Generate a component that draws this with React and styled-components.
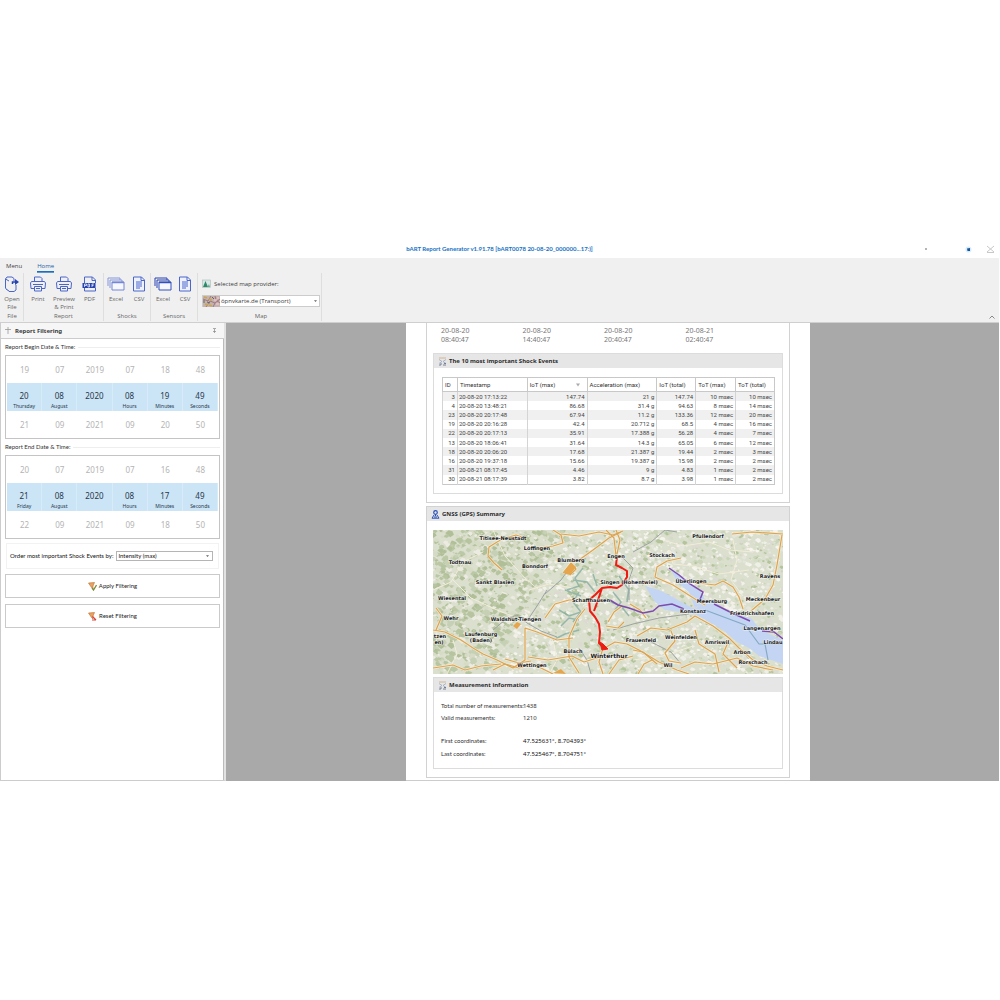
import React from "react";
import styled, { createGlobalStyle, css } from "styled-components";

const Global = createGlobalStyle`
  * { box-sizing: border-box; }
  body { margin: 0; background: #fff; font-family: "Open Sans", "Noto Sans", sans-serif; font-size: 6px; line-height: 8px; color: #3c3c3c; }
  button, select { font: inherit; color: inherit; margin: 0; padding: 0; border: 0; background: none; border-radius: 0; }
  p, h1, h2, h3 { margin: 0; font: inherit; }
`;

const sans = css`font-family: "Noto Sans", "Open Sans", sans-serif;`;
const grid = css`font-family: Roboto, "Liberation Sans", sans-serif;`;
const narrow = css`font-family: Lato, "Liberation Sans", sans-serif;`;

const Window = styled.div`padding: 240px 1px 0 0; min-height: 100vh;`;

/* ---------- title bar ---------- */
const TitleBar = styled.header`
  display: grid; grid-template-columns: 1fr auto 1fr; align-items: center; height: 18px;
`;
const Title = styled.h1`
  && { ${narrow} grid-column: 2; font-weight: 700; font-size: 6px; color: #1671c4; white-space: nowrap; }
`;
const WindowButtons = styled.div`display: flex; justify-content: flex-end; gap: 12px; padding-right: 4px;`;
const WindowButton = styled.button`display: grid; place-items: center; width: 10px; height: 10px; &:first-child { margin-right: 20px; }`;

/* ---------- ribbon ---------- */
const Ribbon = styled.div`background: #f0f0f0; border-bottom: 1px solid #cfcfcf; height: 65px;`;
const Tabs = styled.nav`display: flex; gap: 15px; padding: 3px 0 0 6px; height: 15px;`;
const Tab = styled.button`
  height: 11px; line-height: 10px; font-size: 6px; color: #444;
  border-bottom: 1px solid transparent;
  ${p => p.$active && css`color: #1c5fa8; border-bottom-color: #1c6fbe; box-shadow: 0 1px #5b96cf;`}
`;
const Groups = styled.div`display: flex; height: 48px; padding-left: 1px;`;
const Group = styled.section`
  display: flex; flex-direction: column; justify-content: space-between;
  padding: 0 ${p => p.$end ?? p.$pad ?? 0}px 0 ${p => p.$pad || 0}px; border-right: 1px solid #dedede;
`;
const GroupBody = styled.div`display: flex; justify-content: center;`;
const Caption = styled.h2`&& { text-align: center; font-size: 6px; line-height: 10px; color: #666; }`;
const Tool = styled.button`
  display: flex; flex-direction: column; align-items: center; justify-content: flex-start;
  width: ${p => p.$w || 22}px; height: 38px; padding-top: 3px; color: #666; line-height: 8px;
  svg { display: block; margin-bottom: 3px; flex: none; }
`;
const MapGroup = styled.div`display: flex; flex-direction: column; gap: 7px; padding: 6px 0 0; width: 118px;`;
const MapLabel = styled.label`display: flex; align-items: center; gap: 3px; white-space: nowrap; svg { flex: none; }`;
const MapPicker = styled.div`display: flex; align-items: center; background: #fff; border: 1px solid #ccc; height: 12px; padding-right: 1px; svg { flex: none; }`;
const Collapse = styled.button`margin-left: auto; align-self: flex-end; padding: 0 4px 1px; line-height: 6px;`;
const Select = styled.select`appearance: none; display: block; flex: 1; min-width: 0; height: 10px; line-height: 10px; padding-left: 1px;`;

/* ---------- body ---------- */
const Body = styled.div`display: flex; align-items: stretch; height: 458px; overflow: hidden;`;
const Sidebar = styled.aside`
  ${narrow} width: 226px; flex: none; border-right: 2px solid #e2e2e2; border-left: 1px solid #ccc; background: #fff;
  box-shadow: inset -1px 0 #bbb; border-bottom: 1px solid #ccc;
`;
const SideHead = styled.div`
  display: flex; align-items: center; gap: 4px; height: 16px; padding: 0 8px 0 4px; background: #f6f6f6; border-bottom: 1px solid #ccc;
`;
const SideTitle = styled.h2`&& { ${sans} flex: 1; font-weight: 700; line-height: 14px; }`;
const Stack = styled.div`padding: 4px 4px 0; display: flex; flex-direction: column;`;
const Wheel = styled.section`margin-bottom: 4px;`;
const Legend = styled.h3`
  && { display: flex; align-items: center; gap: 3px; font-size: 6px; line-height: 8px; margin-bottom: 4px; color: #333; }
  &::after { content: ""; flex: 1; border-top: 1px solid #eee; }
`;
const WheelBox = styled.div`
  ${sans} display: grid; grid-template-columns: repeat(6, 1fr); height: 84px; border: 1px solid #c4c4c4; padding: 0 1px;
`;
const WheelCol = styled.div`display: grid; grid-template-rows: 27px 28px 27px; text-align: center; min-width: 0;`;
const Faded = styled.span`font-size: 8px; line-height: 27px; color: #b4b4b4;`;
const Current = styled.span`
  display: block; background: #cbe4f6; padding-top: 8px; border-right: 1px solid #d8ebf9; color: #28394a;
  font-size: 8px; line-height: 10px;
  small { display: block; font-size: 5px; line-height: 10px; }
`;
const OrderRow = styled.div`
  display: flex; align-items: center; gap: 3px; height: 26px; margin: 0 1px 5px; padding: 0 5px 0 3px; border: 1px solid #f2f2f2;
  color: #111; white-space: nowrap;
`;
const OrderBox = styled.div`display: flex; align-items: center; flex: 1; min-width: 0; height: 10px; border: 1px solid #b5b5b5; padding-right: 2px; select { height: 8px; line-height: 8px; }`;
const Action = styled.button`
  display: flex; align-items: center; justify-content: center; gap: 2px; height: 24px; margin-bottom: 6px;
  border: 1px solid #cacaca; background: #fff; color: #222;
`;

const Viewer = styled.main`${sans} flex: 1; background: #a9a9a9; padding-right: 9px; display: flex; justify-content: center; min-width: 0;`;
const Page = styled.article`width: 404px; background: #fff; padding: 0 20px; border-bottom: 1px solid #ccc;`;
const Block = styled.section`border: 1px solid #d2d2d2; ${p => p.$open ? "border-top: 0;" : ""} padding-bottom: 8px; margin-bottom: 3px;`;
const Dates = styled.div`
  display: grid; grid-template-columns: repeat(4, 1fr); padding: 3px 22px 9px 14px; font-size: 7px; line-height: 9px; color: #777;
  p { white-space: pre-line; }
`;
const Bar = styled.h2`
  && { display: flex; align-items: center; gap: 2px; height: 14px; padding-left: 4px; background: #e6e6e6; color: #2c2c2c; font-weight: 700; }
`;
const Panel = styled.div`margin: 0 6px; border: 1px solid #dcdcdc; padding-bottom: 8px;`;

const Table = styled.table`
  ${grid}
  width: calc(100% - 15px); margin: 9px 7px 0 8px; height: 108px; border-collapse: collapse; table-layout: fixed; font-size: 6px; line-height: 8px;
  border: 1px solid #c8c8c8; color: #444;
  th { height: 14px; padding: 0 2px; font-weight: 400; text-align: left; border: 1px solid #c8c8c8; border-width: 1px 0 1px 1px; white-space: nowrap; color: #333; }
  td { padding: 0 2px; text-align: right; border-left: 1px solid #d4d4d4; white-space: nowrap; }
  td:nth-child(2) { text-align: left; padding-left: 1px; }
  tbody tr:nth-child(odd) { background: #f0f0f0; }
`;
const SortHead = styled.span`display: flex; justify-content: space-between; align-items: center; padding-right: 5px;`;

const MapFrame = styled.div`margin: 9px 6px 3px; height: 144px; svg { display: block; width: 100%; height: 144px; }`;
const Facts = styled.dl`
  margin: 8px 7px 0; display: grid; grid-template-columns: 82px 1fr; grid-template-rows: 12px 12px 10px 13px 13px; align-items: center; color: #333;
  dt, dd { margin: 0; white-space: nowrap; }
  dt { ${narrow} }
  dd.strong { color: #111; }
`;
const Gap = styled.i`grid-column: 1 / -1;`;

/* ---------- icons ---------- */
const BLUE = "#4b66c8";
const Icon = ({ children, w = 16, h = 16, v = "0 0 16 16" }) => (
  <svg width={w} height={h} viewBox={v} fill="none" stroke={BLUE} strokeWidth="1" aria-hidden="true">{children}</svg>
);
const OpenIcon = () => (
  <Icon>
    <path d="M10 2.500L8 1H3L1.500 3v9L3 14h1l1 1.500h5l2-1.500V9M10 2.500V5M1.500 3L5 5" />
    <path d="M8.500 8V6H12" strokeWidth="1.500" stroke="#2743b0" />
    <path d="M11 3l4 3-4 3z" fill="#2743b0" stroke="none" />
  </Icon>
);
const PrintIcon = () => (
  <Icon>
    <path d="M4.500 6V1h6l1.500 1.500V6M4 12.500H1L.5 7l1-1.500h13L15.500 7l-.5 5.500h-3" />
    <path d="M4.500 10.500h7v4.500h-7zM3 8.500h10M6 12.500h4" />
  </Icon>
);
const PdfIcon = () => (
  <Icon>
    <path d="M2.500 7V1h8l3 3v3M2.500 12v3h11v-3M10 1v3.500h3.500" />
    <rect x=".5" y="7" width="13" height="5" fill="#2743b0" stroke="none" />
    <path d="M2.500 11V8h2v1.500h-2M6 8v3h1.500V8zM10 11V8h2M10 9.500h1.500" stroke="#fff" strokeWidth=".7" />
  </Icon>
);
const SheetsIcon = ({ dark }) => (
  <Icon w={18} v="0 0 18 16">
    <path d="M1 10V2h12v2M3 12V4h12v2" stroke={dark ? "#2743b0" : "#8797dc"} />
    <path d="M5 6h12v8H5z" fill="#f7f8ff" stroke={dark ? "#3350bb" : "#7487d6"} />
    <path d="M5 6.500h12" strokeWidth="1.500" stroke={dark ? "#3350bb" : "#7487d6"} />
  </Icon>
);
const CsvIcon = () => (
  <Icon>
    <path d="M2.500 1h8l3 3v11h-11z" fill="#eef1ff" />
    <path d="M10 1v3.500h3.500M5 6h6M5 8h6M5 10h6M5 12h4" />
  </Icon>
);
const Arrow = () => <svg width="5" height="4" viewBox="0 0 5 4" aria-hidden="true"><path d="M1 1.200h3L2.500 2.900z" fill="#666" /></svg>;
const PicIcon = () => (
  <svg width="9" height="9" viewBox="0 0 9 9" aria-hidden="true">
    <rect x=".5" y="1" width="8" height="7.500" fill="#d8e8e4" stroke="#a9bdb9" strokeWidth=".6" />
    <path d="M1 8l2.500-6L6 8z" fill="#2f8a6a" /><path d="M5.500 8L7 5l1 3z" fill="#66a98e" />
  </svg>
);
const ThumbIcon = () => (
  <svg width="17" height="11" viewBox="0 0 17 11" aria-hidden="true">
    <rect width="17" height="11" fill="#c4b3ae" />
    <path d="M0 3l5 2 3-5M3 11l4-6 5 2 5-4M10 11l2-4M12 0l1 4 4 3" stroke="#8f5f6b" fill="none" strokeWidth=".7" />
    <path d="M1 1l3 1M2 8l3 1M6 3l3 1M6 9l3 1" stroke="#c9a650" strokeWidth="1.500" />
    <path d="M4 6l3 1M1 4v3M9 1l2 2" stroke="#666" />
    <path d="M11 4h3M13 8h3M14 2h2" stroke="#e7c3cb" strokeWidth="1.500" />
  </svg>
);
const ChartIcon = () => (
  <svg width="9" height="9" viewBox="0 0 9 9" fill="none" aria-hidden="true">
    <path d="M1 1h7" stroke="#cfa878" strokeWidth=".8" /><path d="M1 2.500l3 2-3 2M8 2.500l-3 2 3 2" stroke="#9aaac0" strokeWidth=".8" />
    <path d="M1 8h2V6M5 8h3M6 6.500h2" stroke="#5c6a80" strokeWidth=".8" />
  </svg>
);
const GpsIcon = () => (
  <svg width="9" height="9" viewBox="0 0 9 9" fill="none" stroke="#2a50b8" aria-hidden="true">
    <circle cx="4.500" cy="2.500" r="1.800" strokeWidth="1.200" /><path d="M4.500 4v2M3 5L1 8.200h7L6 5M3 7h3" />
  </svg>
);
const FunnelIcon = ({ mark }) => (
  <svg width="9" height="9" viewBox="0 0 9 9" fill="none" aria-hidden="true">
    <path d="M.5 1l6-.5L5 4v3L3.500 5.500z" fill="#e9a45c" stroke="#bd6c35" strokeWidth=".6" />
    {mark === "ok"
      ? <path d="M4 6l1.500 2L8.500 3" stroke="#7d8a3a" strokeWidth="1.300" />
      : <path d="M4.500 4.500l3.500 3.500M8 8H4" stroke="#d8453a" strokeWidth="1.200" />}
  </svg>
);

/* ---------- map ---------- */
const labels = [
  ["Titisee-Neustadt", 70, 8], ["Pfullendorf", 275, 6], ["Löffingen", 104, 18], ["Todtnau", 27, 32], ["Bonndorf", 102, 36],
  ["Blumberg", 138, 30], ["Engen", 183, 26], ["Stockach", 229, 25], ["Sankt Blasien", 62, 52], ["Singen (Hohentwiel)", 196, 52],
  ["Überlingen", 258, 51], ["Ravens", 337, 46], ["Wiesental", 19, 68], ["Schaffhausen", 158, 70], ["Meersburg", 279, 71],
  ["Meckenbeur", 330, 69], ["Konstanz", 260, 81], ["Friedrichshafen", 319, 83], ["Wehr", 18, 88], ["Waldshut-Tiengen", 83, 89],
  ["Laufenburg", 48, 104], ["(Baden)", 48, 110], ["Langenargen", 329, 98], ["Frauenfeld", 208, 110], ["Weinfelden", 248, 107],
  ["Amriswil", 284, 112], ["Lindau", 340, 112], ["tzen", 7, 106], ["en)", 6, 112], ["Bülach", 140, 121], ["Arbon", 309, 122],
  ["Rorschach", 320, 132], ["Wettingen", 99, 135], ["Wil", 235, 135],
];
let seed = 11;
const rnd = () => ((seed = (seed * 16807) % 2147483647) / 2147483647);
const patches = Array.from({ length: 3600 }, () => {
  const x = rnd() * 350, y = rnd() * 144, west = x + y * 0.6 < 140;
  const pool = west
    ? ["#b6c49f", "#bbc8a5", "#b0bf98", "#c6d0b4", "#d6dbc6", "#ecebe2"]
    : ["#b3c39c", "#c9d4b8", "#eeefe6", "#f2f0e8", "#e4e6dc", "#f6f4ef", "#dcdad2", "#d3dcc4"];
  const s = 1 + rnd() * (west ? 3 : 2);
  return [x, y, s, pool[Math.floor(rnd() * pool.length)], rnd()];
});
const roads = [
  "M69 9l-13 8-1 9 6 7 8 7M69 9l14-4 6 2", "M120 0l8 5 2 8-10 3-14 2", "M128 4l18 2 20-4 14 3 10-4",
  "M130 43l8-10 5 6-6 6M146 30l14-10 16-12 12-6", "M0 100l12 2 16 8 12 8 10 6 14 6 16 8 12-8 0-32 12 4 20 8 16-2",
  "M0 138l20-3 12 5 16-4 20-2M95 127l20 3 24-4 12 6 16-5", "M112 88l10-14 14-4 12 0M136 107l8-18 8-10",
  "M136 107l0 20 10 16M168 120l14-8 12 2 12 6 20 12 18 8 12 4", "M183 26l-2-18-8-8M183 0l4 10-3 14",
  "M222 47l2-10 10-6 14-3M222 47l18 8 22 14 10 6", "M197 74l10 6 6 8M258 52l24 3 8-4 10 6 6 10 4 12",
  "M299 4l20-2 31 2M349 5l-5 30-4 20M340 55l-8 14-14 12", "M262 86l-8 6-20 8-16-2-14 8M262 86l18 10 16 12 10 10 14 12 14 6 16 4",
  "M175 92l6-10 8-6M173 96l12 2 6-6M170 118l-4 14 4 12M176 144l10-14 14-4M238 101l4 10-10 12 4 8 12 2",
  "M262 100l4 14 16 10 4 18M296 110l-6 14 14 14M248 138l14-6 18 2 24-6 16 8 20 4", "M72 129l14 4 12-2M60 140l12-6 14 4 14-4 20 10",
  "M3 78l6 8-6 14", "M205 144l6-10 8-4M200 120l10 2 14 12",
];
const greys = [
  "M60 100l12-10 12-5 10 8 14 8 16 6", "M114 60l-10 16-8 12M112 64l16-14 10-14", "M200 22l18-10 14-12 12 2",
  "M190 28l10 10-4 12 0 20M180 100l20-6 26-6 30-4", "M196 110l22 2 20 10 10 12", "M146 118l8 12 4 14",
];
const lanes = [
  "M20 50l18 18 26 12 20 8", "M60 0l12 26 20 22 14 12", "M0 60l18-8 12-20 20-10", "M96 60l20-6 24 4", "M230 10l20 6 26-4 20 8 24 2",
  "M236 20l4 14 20 2 26 8 30-4", "M300 10l4 20-6 20 12 16", "M200 130l30-4 30-10M14 144l10-20-4-14M120 110l4 20-8 14",
];
const teals = [
  "M150 38l-8 10 4 8-12 4M160 44l4 12M128 96l8-8 10 2M146 62l-6 10 8 10-8 10M180 62l8 10-6 8M132 60l16 6",
  "M174 70l14 6 8 10M120 110l12-6 14-4M186 46l10 14-2 12M140 50l14 2 8 10M126 80l10 6 12-4M196 58l-2 12",
];

function RouteMap() {
  return (
    <svg viewBox="0 0 350 144" preserveAspectRatio="xMidYMid slice" role="img" aria-label="Route map">
      <rect width="350" height="144" fill="#dbdfcd" />
      {patches.map(([x, y, s, c, r], i) => (
        <path key={i} fill={c} d={`M${x - s} ${y}l${s * r} ${-s * 0.8}l${s} ${s * 0.3}l${s * 0.4} ${s * r}l${-s} ${s * 0.7}z`} />
      ))}
      <g fill="none" stroke="#f2edd8" strokeWidth="1">{lanes.map(d => <path key={d} d={d} />)}</g>
      <g fill="none" stroke="#86aea2" strokeWidth="1.500" opacity=".8">{teals.map(d => <path key={d} d={d} />)}</g>
      <path d="M212 56l14 4 12 6 12 7 12 6 10-8 8-1 10 8 12 6 16 4 8 10 10 6 14 6v24l-12-4-12-4-10-8-12-6-14-12-14-8-14-8-14-2-16-2-10-8z" fill="#c3d5f2" />
      <path d="M238 40l8 4 14 12 10 8 2 8-10 6-6-16-12-10z" fill="#c3d5f2" />
      <g fill="none" stroke="#9da3a3" strokeWidth="1">{greys.map(d => <path key={d} d={d} />)}</g>
      <g fill="none" stroke="#f5ead0" strokeWidth="2.400" strokeLinejoin="round">{roads.map(d => <path key={d} d={d} />)}</g>
      <g fill="none" stroke="#d9a456" strokeWidth="1.200" strokeLinejoin="round">{roads.map(d => <path key={d} d={d} />)}</g>
      <path d="M130 43l8-10 5 4-6 8zM80 96l4-4 4 2-4 5zM120 143l8-4 5 5z" fill="#e6a54a" />
      <path d="M272 80l40 15 14 19h24M332 114l3 16" fill="none" stroke="#86a9c4" strokeWidth="1.200" />
      <path d="M177 70l8 5 11 3 14 5 10-2 6-5 13-2 12 5M236 38l10 7 11 9 13 8-4 10M281 74l18 9 18 8M329 101l12 1 9 7" fill="none" stroke="#7d4bae" strokeWidth="1.500" />
      <path d="M184 27l-1 8 6 3 5 3v6l-5 8-5 3-7-1-8 1-7 7-6 5 1 11 5 6 4 7 1 8-1 11 5 5M169 58l-4 12-4 11" fill="none" stroke="#ee1b12" strokeWidth="2" strokeLinejoin="round" />
      <path d="M167 112l3 2 5 5-6 1z" fill="#ee1b12" stroke="#ee1b12" />
      <g fontFamily="DejaVu Sans, Verdana, sans-serif" fontWeight="700" fontSize="5" fill="#222" stroke="#fff" strokeOpacity=".65" strokeWidth="1.200" paintOrder="stroke" textAnchor="middle">
        {labels.map(([t, x, y]) => <text key={t} x={x} y={y + 2}>{t}</text>)}
        <text x="176" y="128" fontSize="6">Winterthur</text>
      </g>
    </svg>
  );
}

/* ---------- data ---------- */
const rows = [
  ["3", "20-08-20 17:13:22", "147.74", "21 g", "147.74", "10 msec", "10 msec"],
  ["4", "20-08-20 13:48:21", "86.68", "31.4 g", "94.63", "8 msec", "14 msec"],
  ["23", "20-08-20 20:17:48", "67.94", "11.2 g", "133.36", "12 msec", "20 msec"],
  ["19", "20-08-20 20:16:28", "42.4", "20.712 g", "68.5", "4 msec", "16 msec"],
  ["22", "20-08-20 20:17:13", "35.91", "17.388 g", "56.28", "4 msec", "7 msec"],
  ["13", "20-08-20 18:06:41", "31.64", "14.3 g", "65.05", "6 msec", "12 msec"],
  ["18", "20-08-20 20:06:20", "17.68", "21.387 g", "19.44", "2 msec", "3 msec"],
  ["16", "20-08-20 19:37:18", "15.66", "19.387 g", "15.98", "2 msec", "2 msec"],
  ["31", "20-08-21 08:17:45", "4.46", "9 g", "4.83", "1 msec", "2 msec"],
  ["30", "20-08-21 08:17:39", "3.82", "8.7 g", "3.98", "1 msec", "2 msec"],
];
const widths = [15, 70, 60, 70, 39, 40, 39];
const heads = ["ID", "Timestamp", "IoT (max)", "Acceleration (max)", "IoT (total)", "ToT (max)", "ToT (total)"];

const DateWheel = ({ title, cols }) => (
  <Wheel>
    <Legend>{title}</Legend>
    <WheelBox>
      {cols.map(([before, now, after, unit], i) => (
        <WheelCol key={i}>
          <Faded>{before}</Faded>
          <Current>{now}<small>{unit}</small></Current>
          <Faded>{after}</Faded>
        </WheelCol>
      ))}
    </WheelBox>
  </Wheel>
);

export default function App() {
  return (
    <Window>
      <Global />
      <TitleBar>
        <Title>bART Report Generator v1.91.78 [bART0078 20-08-20_000000...17:)]</Title>
        <WindowButtons>
          <WindowButton aria-label="Minimize"><svg width="4" height="4"><circle cx="2" cy="2" r=".8" fill="#555" /></svg></WindowButton>
          <WindowButton aria-label="Restore"><svg width="7" height="7"><circle cx="3.500" cy="3.500" r="3" fill="#d6ecfb" /><path d="M2 2.500L5 2v3H2.500z" fill="#17549c" /></svg></WindowButton>
          <WindowButton aria-label="Close"><svg width="9" height="8" stroke="#c8c8c8" fill="none"><path d="M1 1l7 6M8 1L1 7M1 7.500h7" /></svg></WindowButton>
        </WindowButtons>
      </TitleBar>

      <Ribbon>
        <Tabs><Tab>Menu</Tab><Tab $active>Home</Tab></Tabs>
        <Groups>
          <Group>
            <GroupBody><Tool><OpenIcon />Open<br />File</Tool></GroupBody>
            <Caption>File</Caption>
          </Group>
          <Group $pad={1}>
            <GroupBody>
              <Tool $w={26}><PrintIcon />Print</Tool>
              <Tool $w={26}><PrintIcon />Preview<br />&amp; Print</Tool>
              <Tool $w={25}><PdfIcon />PDF</Tool>
            </GroupBody>
            <Caption>Report</Caption>
          </Group>
          <Group>
            <GroupBody><Tool $w={24}><SheetsIcon />Excel</Tool><Tool><CsvIcon />CSV</Tool></GroupBody>
            <Caption>Shocks</Caption>
          </Group>
          <Group $pad={1}>
            <GroupBody><Tool><SheetsIcon dark />Excel</Tool><Tool><CsvIcon />CSV</Tool></GroupBody>
            <Caption>Sensors</Caption>
          </Group>
          <Group $pad={4} $end={1}>
            <MapGroup>
              <MapLabel htmlFor="provider"><PicIcon />Selected map provider:</MapLabel>
              <MapPicker>
                <ThumbIcon />
                <Select id="provider"><option>öpnvkarte.de (Transport)</option></Select>
                <Arrow />
              </MapPicker>
            </MapGroup>
            <Caption>Map</Caption>
          </Group>
          <Collapse aria-label="Collapse ribbon"><svg width="6" height="4" fill="none" stroke="#888"><path d="M.5 3.500L3 1l2.500 2.500" /></svg></Collapse>
        </Groups>
      </Ribbon>

      <Body>
        <Sidebar>
          <SideHead>
            <svg width="6" height="7" fill="none" stroke="#999"><path d="M0 2.500h6M3 0v7" strokeWidth=".8" /></svg>
            <SideTitle>Report Filtering</SideTitle>
            <svg width="3" height="5" fill="none" stroke="#888"><path d="M0 .5h3M1.500 1v4M0 3.500h3" strokeWidth=".7" /></svg>
          </SideHead>
          <Stack>
            <DateWheel title="Report Begin Date & Time:" cols={[
              ["19", "20", "21", "Thursday"], ["07", "08", "09", "August"], ["2019", "2020", "2021", ""],
              ["07", "08", "09", "Hours"], ["18", "19", "20", "Minutes"], ["48", "49", "50", "Seconds"]]} />
            <DateWheel title="Report End Date & Time:" cols={[
              ["20", "21", "22", "Friday"], ["07", "08", "09", "August"], ["2019", "2020", "2021", ""],
              ["07", "08", "09", "Hours"], ["16", "17", "18", "Minutes"], ["48", "49", "50", "Seconds"]]} />
            <OrderRow>
              <label htmlFor="order">Order most important Shock Events by:</label>
              <OrderBox><Select id="order"><option>Intensity (max)</option></Select><Arrow /></OrderBox>
            </OrderRow>
            <Action><FunnelIcon mark="ok" />Apply Filtering</Action>
            <Action><FunnelIcon />Reset Filtering</Action>
          </Stack>
        </Sidebar>

        <Viewer>
          <Page>
            <Block $open>
              <Dates>
                <p>{"20-08-20\n08:40:47"}</p><p>{"20-08-20\n14:40:47"}</p><p>{"20-08-20\n20:40:47"}</p><p>{"20-08-21\n02:40:47"}</p>
              </Dates>
              <Panel>
                <Bar><ChartIcon />The 10 most important Shock Events</Bar>
                <Table>
                  <colgroup>{widths.map((w, i) => <col key={i} style={{ width: `${(w / 333) * 100}%` }} />)}</colgroup>
                  <thead><tr>{heads.map((h, i) => <th key={h} scope="col">{i === 2 ? <SortHead>{h}<svg width="4" height="4"><path d="M0 .5h4L2 3.500z" fill="#aaa" /></svg></SortHead> : h}</th>)}</tr></thead>
                  <tbody>{rows.map(r => <tr key={r[0]}>{r.map((c, i) => <td key={i}>{c}</td>)}</tr>)}</tbody>
                </Table>
              </Panel>
            </Block>
            <Block>
              <Bar><GpsIcon />GNSS (GPS) Summary</Bar>
              <MapFrame><RouteMap /></MapFrame>
              <Panel>
                <Bar><ChartIcon />Measurement information</Bar>
                <Facts>
                  <dt>Total number of measurements:</dt><dd>1438</dd>
                  <dt>Valid measurements:</dt><dd>1210</dd>
                  <Gap />
                  <dt>First coordinates:</dt><dd className="strong">47.525631°, 8.704393°</dd>
                  <dt>Last coordinates:</dt><dd className="strong">47.525467°, 8.704751°</dd>
                </Facts>
              </Panel>
            </Block>
          </Page>
        </Viewer>
      </Body>
    </Window>
  );
}
